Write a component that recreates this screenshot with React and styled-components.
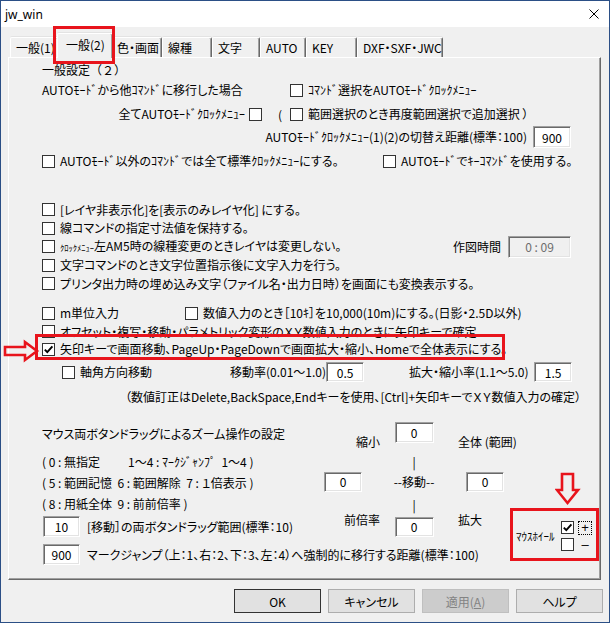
import React from "react";
import styled, { createGlobalStyle } from "styled-components";

const Global = createGlobalStyle`
  html, body { margin: 0; padding: 0; background: #ffffff; }
  * { box-sizing: border-box; }
`;

const Window = styled.div`
  position: relative;
  width: 610px;
  height: 623px;
  border: 1px solid #2b4f86;
  background: #f0f0f0;
  display: flex;
  flex-direction: column;
  font-family: "Noto Sans CJK JP", "Noto Sans", sans-serif;
  font-size: 12px;
  color: #000;
  font-feature-settings: "palt";
  overflow: hidden;
`;

const TitleBar = styled.div`
  height: 26px;
  flex: 0 0 26px;
  background: #ffffff;
  display: flex;
  align-items: center;
  justify-content: space-between;
  padding: 0 10px 0 4px;
`;

const Title = styled.span`
  font-family: "Noto Sans", "Open Sans", sans-serif;
  font-size: 12px;
`;

const TabStrip = styled.div`
  position: relative;
  z-index: 1;
  display: flex;
  align-items: flex-end;
  height: 24px;
  flex: 0 0 24px;
  margin-top: 6px;
  padding-left: 9px;
`;

const Tab = styled.div`
  flex: 0 0 ${(p) => p.$w + (p.$active ? 4 : 0)}px;
  height: ${(p) => (p.$active ? 25 : 20)}px;
  margin: 0 ${(p) => (p.$active ? -2 : 0)}px ${(p) => (p.$active ? -1 : 0)}px;
  position: relative;
  z-index: ${(p) => (p.$active ? 2 : 0)};
  background: #f0f0f0;
  border-top: 1px solid #ffffff;
  border-left: 1px solid #ffffff;
  border-right: 1px solid #696969;
  box-shadow: inset -1px 0 0 #a0a0a0, 0 -1px 0 #e3e3e3;
  border-radius: 2px 2px 0 0;
  display: flex;
  align-items: ${(p) => (p.$active ? "flex-start" : "center")};
  padding: ${(p) => (p.$active ? "2px 0 0 8px" : "0 0 0 5px")};
  white-space: nowrap;
`;

const Panel = styled.div`
  margin-left: 7px;
  width: 593px;
  height: 523px;
  flex: 0 0 523px;
  border-top: 1px solid #ffffff;
  border-left: 1px solid #ffffff;
  border-right: 1px solid #696969;
  border-bottom: 1px solid #696969;
  box-shadow: inset -1px -1px 0 #a0a0a0;
  padding-left: 33px;
  display: flex;
  flex-direction: column;
`;

const Row = styled.div`
  display: flex;
  align-items: center;
  height: ${(p) => p.$h || 20}px;
  flex: 0 0 ${(p) => p.$h || 20}px;
  margin-top: ${(p) => p.$mt || 0}px;
  padding-left: ${(p) => p.$pl || 0}px;
  white-space: nowrap;
`;

const Cell = styled.div`
  flex: 0 0 ${(p) => p.$w}px;
  margin-left: ${(p) => p.$ml || 0}px;
  display: flex;
  align-items: center;
  justify-content: ${(p) => (p.$end ? "flex-end" : "flex-start")};
  white-space: nowrap;
`;

const Text = styled.span`
  flex-shrink: 0;
  white-space: pre;
  line-height: 16px;
  font-feature-settings: ${(p) => (p.$fullWidth ? "normal" : "inherit")};
`;

/* the tiny half-width katakana some labels use */
const Small = styled.span`
  font-size: 8.5px;
`;

const Paren = styled.span`
  flex: 0 0 28px;
  padding-left: 16px;
`;

const CheckItem = styled.label`
  display: flex;
  align-items: center;
  gap: 5px;
  flex-shrink: 0;
`;

const Box = styled.span`
  flex: 0 0 13px;
  width: 13px;
  height: 13px;
  margin-left: ${(p) => p.$ml || 0}px;
  border: 1px solid #333333;
  background: #ffffff;
  display: inline-flex;
  align-items: center;
  justify-content: center;
`;

const Field = styled.div`
  flex: 0 0 ${(p) => p.$w || 38}px;
  width: ${(p) => p.$w || 38}px;
  height: ${(p) => p.$h || 21}px;
  margin-left: ${(p) => p.$ml || 0}px;
  background: ${(p) => (p.$disabled ? "#f0f0f0" : "#ffffff")};
  color: ${(p) => (p.$disabled ? "#6d6d6d" : "#000000")};
  border-style: solid;
  border-width: 1px;
  border-color: #a0a0a0 #ffffff #ffffff #a0a0a0;
  box-shadow: inset 1px 1px 0 #696969, inset -1px -1px 0 #e3e3e3;
  display: flex;
  align-items: center;
  justify-content: center;
  white-space: pre;
`;

const ZoomSection = styled.div`
  display: grid;
  grid-template-columns: 282px 180px 1fr;
  grid-template-areas:
    "desc pad wheel"
    "jump jump wheel";
  margin-top: 15px;
`;

const Desc = styled.div`
  grid-area: desc;
  display: flex;
  flex-direction: column;
`;

const DescTitle = styled.div`
  height: 24px;
  line-height: 24px;
  white-space: nowrap;
`;

const DescLine = styled.div`
  height: 21px;
  display: flex;
  align-items: center;
  margin-top: ${(p) => p.$mt || 0}px;
  white-space: pre;
`;

const Spacer = styled.span`
  display: inline-block;
  flex: 0 0 ${(p) => p.$w}px;
`;

const FieldRow = styled.div`
  grid-area: ${(p) => p.$area || "auto"};
  display: flex;
  align-items: center;
  gap: 7px;
  height: 21px;
  margin-top: ${(p) => p.$mt || 0}px;
  padding-left: 1px;
  white-space: nowrap;
`;

const Pad = styled.div`
  grid-area: pad;
  display: grid;
  grid-template-columns: 68px 44px 68px;
  grid-template-rows: 25px 25px 20px 25px 20px;
`;

const PadItem = styled.div`
  grid-column: ${(p) => p.$col};
  grid-row: ${(p) => p.$row};
  justify-self: ${(p) => p.$jx || "center"};
  align-self: ${(p) => p.$jy || "center"};
  padding: ${(p) => p.$pad || "0"};
  margin: ${(p) => p.$m || "0"};
  line-height: 14px;
  white-space: nowrap;
`;

const Wheel = styled.div`
  grid-area: wheel;
  align-self: start;
  margin-top: 97px;
  padding-left: 12px;
  display: flex;
  align-items: center;
`;

const WheelLabel = styled.span`
  flex: 0 0 45px;
  font-size: 11px;
  white-space: nowrap;
`;

const WheelGrid = styled.div`
  display: grid;
  grid-template-columns: 13px 14px;
  grid-template-rows: 17px 17px;
  column-gap: 4px;
  align-items: center;
`;

const Sign = styled.span`
  width: 14px;
  height: 14px;
  display: flex;
  align-items: center;
  justify-content: center;
  outline: ${(p) => (p.$focus ? "1px dotted #000" : "none")};
  outline-offset: -1px;
  font-family: "Liberation Sans", sans-serif;
  font-size: 13px;
  line-height: 14px;
`;

const ButtonBar = styled.div`
  display: flex;
  justify-content: flex-end;
  gap: 7px;
  margin-top: 9px;
  padding-right: 6px;
`;

const Button = styled.div`
  width: 87px;
  height: 24px;
  border: 1px solid ${(p) => (p.$default ? "#333333" : p.$disabled ? "#bfbfbf" : "#adadad")};
  background: ${(p) => (p.$disabled ? "#cccccc" : "#e1e1e1")};
  color: ${(p) => (p.$disabled ? "#838383" : "#000000")};
  display: flex;
  align-items: center;
  justify-content: center;
`;

/* red annotation frames and arrows drawn over the dialog */
const Frame = styled.div`
  position: absolute;
  left: ${(p) => p.$x}px;
  top: ${(p) => p.$y}px;
  width: ${(p) => p.$w}px;
  height: ${(p) => p.$h}px;
  border: 3px solid #e8141c;
  pointer-events: none;
  z-index: 5;
`;

const ArrowSvg = styled.svg`
  position: absolute;
  left: ${(p) => p.$x}px;
  top: ${(p) => p.$y}px;
  pointer-events: none;
  z-index: 5;
`;

const Tick = () => (
  <svg width="11" height="11" viewBox="0 0 11 11">
    <path d="M1.8 5.6 L4.3 8.2 L9.4 2.4" fill="none" stroke="#000" strokeWidth="1.9" />
  </svg>
);

const Check = ({ label, checked }) => (
  <CheckItem>
    <Box>{checked && <Tick />}</Box>
    {label && <Text>{label}</Text>}
  </CheckItem>
);

const CloseIcon = () => (
  <svg width="10" height="10" viewBox="0 0 10 10">
    <path d="M0.5 0.5 L9.5 9.5 M9.5 0.5 L0.5 9.5" stroke="#000" strokeWidth="1" />
  </svg>
);

const tabs = [
  { label: "一般(1)", w: 49 },
  { label: "一般(2)", w: 52, active: true },
  { label: "色・画面", w: 51 },
  { label: "線種", w: 50 },
  { label: "文字", w: 48 },
  { label: "AUTO", w: 46 },
  { label: "KEY", w: 51 },
  { label: "DXF・SXF・JWC", w: 85 },
];

export default function App() {
  return (
    <>
      <Global />
      <Window>
        <TitleBar>
          <Title>jw_win</Title>
          <CloseIcon />
        </TitleBar>

        <TabStrip>
          {tabs.map((t) => (
            <Tab key={t.label} $w={t.w} $active={t.active}>
              {t.label}
            </Tab>
          ))}
        </TabStrip>

        <Panel>
          <Row $mt={2}>
            <Text $fullWidth>一般設定（２）</Text>
          </Row>
          <Row>
            <Cell $w={248}>
              <Text>AUTOﾓｰﾄﾞから他ｺﾏﾝﾄﾞに移行した場合</Text>
            </Cell>
            <Check label="ｺﾏﾝﾄﾞ選択をAUTOﾓｰﾄﾞｸﾛｯｸﾒﾆｭｰ" />
          </Row>
          <Row $mt={4}>
            <Cell $w={248} $end>
              <Text>全てAUTOﾓｰﾄﾞｸﾛｯｸﾒﾆｭｰ</Text>
              <Box $ml={4} />
              <Paren>(</Paren>
            </Cell>
            <Check label="範囲選択のとき再度範囲選択で追加選択 ）" />
          </Row>
          <Row $mt={2} $h={22}>
            <Cell $w={485} $end>
              <Text>AUTOﾓｰﾄﾞｸﾛｯｸﾒﾆｭｰ(1)(2)の切替え距離(標準：100)</Text>
            </Cell>
            <Field $w={38} $h={22} $ml={6}>900</Field>
          </Row>
          <Row $mt={3}>
            <Cell $w={341}>
              <Check label="AUTOﾓｰﾄﾞ以外のｺﾏﾝﾄﾞでは全て標準ｸﾛｯｸﾒﾆｭｰにする。" />
            </Cell>
            <Check label="AUTOﾓｰﾄﾞでｷｰｺﾏﾝﾄﾞを使用する。" />
          </Row>

          <Row $mt={29} $h={19}>
            <Check label="[レイヤ非表示化]を[表示のみレイヤ化] にする。" />
          </Row>
          <Row $h={18}>
            <Check label="線コマンドの指定寸法値を保持する。" />
          </Row>
          <Row $h={19}>
            <Cell $w={411}>
              <Check
                label={
                  <>
                    <Small>ｸﾛｯｸﾒﾆｭｰ</Small>左AM5時の線種変更のときレイヤは変更しない。
                  </>
                }
              />
            </Cell>
            <Text>作図時間</Text>
            <Field $w={63} $h={22} $ml={7} $disabled>
              0 : 09
            </Field>
          </Row>
          <Row $h={18}>
            <Check label="文字コマンドのとき文字位置指示後に文字入力を行う。" />
          </Row>
          <Row $h={19}>
            <Check label="プリンタ出力時の埋め込み文字（ファイル名・出力日時）を画面にも変換表示する。" />
          </Row>

          <Row $mt={10}>
            <Cell $w={143}>
              <Check label="m単位入力" />
            </Cell>
            <Check label="数値入力のとき［10ｷ］を10,000(10m)にする。(日影・2.5D以外)" />
          </Row>
          <Row $h={17}>
            <Check label="オフセット・複写・移動・パラメトリック変形のＸＹ数値入力のときに矢印キーで確定" />
          </Row>
          <Row $h={18}>
            <Check checked label="矢印キーで画面移動、PageUp・PageDownで画面拡大・縮小、Homeで全体表示にする。" />
          </Row>
          <Row $mt={4} $pl={20}>
            <Cell $w={168}>
              <Check label="軸角方向移動" />
            </Cell>
            <Cell $w={95}>
              <Text>移動率(0.01〜1.0)</Text>
            </Cell>
            <Field $w={38} $h={20}>0.5</Field>
            <Cell $w={125} $ml={45}>
              <Text>拡大・縮小率(1.1〜5.0)</Text>
            </Cell>
            <Field $w={38} $h={20}>1.5</Field>
          </Row>
          <Row $mt={5} $pl={83}>
            <Text>（数値訂正はDelete,BackSpace,Endキーを使用、[Ctrl]+矢印キーでＸＹ数値入力の確定）</Text>
          </Row>

          <ZoomSection>
            <Desc>
              <DescTitle>マウス両ボタンドラッグによるズーム操作の設定</DescTitle>
              <DescLine $mt={5}>
                <Spacer $w={86}>( 0 : 無指定</Spacer>
                <span>1〜4 : ﾏｰｸｼﾞｬﾝﾌﾟ  1〜4 )</span>
              </DescLine>
              <DescLine>( 5 : 範囲記憶  6 : 範囲解除  7 : １倍表示 )</DescLine>
              <DescLine>( 8 : 用紙全体  9 : 前前倍率 )</DescLine>
              <FieldRow $mt={2}>
                <Field $w={37} $h={21}>10</Field>
                <Text>[移動］の両ボタンドラッグ範囲(標準：10)</Text>
              </FieldRow>
            </Desc>

            <Pad>
              <PadItem $col={1} $row={1} $jx="end" $jy="end" $pad="0 12px 0 0" $m="0 0 -2px 0">
                縮小
              </PadItem>
              <PadItem $col={2} $row={1} $jy="start">
                <Field $w={39} $h={21}>0</Field>
              </PadItem>
              <PadItem $col={3} $row={1} $jx="start" $jy="end" $pad="0 0 0 22px" $m="0 0 -2px 0">
                全体 (範囲)
              </PadItem>
              <PadItem $col={2} $row={2} $m="4px 0 0 0">|</PadItem>
              <PadItem $col={1} $row={3} $jx="start">
                <Field $w={38} $h={20}>0</Field>
              </PadItem>
              <PadItem $col={2} $row={3}>--移動--</PadItem>
              <PadItem $col={3} $row={3} $jx="end">
                <Field $w={38} $h={20}>0</Field>
              </PadItem>
              <PadItem $col={2} $row={4}>|</PadItem>
              <PadItem $col={1} $row={5} $jx="end" $jy="start" $pad="0 12px 0 0" $m="-4px 0 0 0">
                前倍率
              </PadItem>
              <PadItem $col={2} $row={5}>
                <Field $w={39} $h={20}>0</Field>
              </PadItem>
              <PadItem $col={3} $row={5} $jx="start" $jy="start" $pad="0 0 0 22px" $m="-4px 0 0 0">
                拡大
              </PadItem>
            </Pad>

            <FieldRow $area="jump" $mt={7}>
              <Field $w={37} $h={21}>900</Field>
              <Text>マークジャンプ（上：1、右：2、下：3、左：4）へ強制的に移行する距離(標準：100)</Text>
            </FieldRow>

            <Wheel>
              <WheelLabel>ﾏｳｽﾎｲｰﾙ</WheelLabel>
              <WheelGrid>
                <Box>
                  <Tick />
                </Box>
                <Sign $focus>+</Sign>
                <Box />
                <Sign>–</Sign>
              </WheelGrid>
            </Wheel>
          </ZoomSection>
        </Panel>

        <ButtonBar>
          <Button $default>OK</Button>
          <Button>キャンセル</Button>
          <Button $disabled>
            <span>
              適用(<u>A</u>)
            </span>
          </Button>
          <Button>ヘルプ</Button>
        </ButtonBar>

        <Frame $x={52} $y={25} $w={62} $h={38} />
        <Frame $x={34} $y={333} $w={470} $h={26} />
        <Frame $x={509} $y={507} $w={89} $h={53} />

        <ArrowSvg $x={1} $y={338} width="38" height="24" viewBox="0 0 38 24">
          <polygon
            points="3,8 23,8 23,3 35,12 23,21 23,16 3,16"
            fill="none"
            stroke="#e8141c"
            strokeWidth="2.6"
            strokeLinejoin="miter"
          />
        </ArrowSvg>
        <ArrowSvg $x={554} $y={470} width="26" height="36" viewBox="0 0 26 36">
          <polygon
            points="7,3 18,3 18,19 23,19 12.5,32 2,19 7,19"
            fill="none"
            stroke="#e8141c"
            strokeWidth="2.6"
            strokeLinejoin="miter"
          />
        </ArrowSvg>
      </Window>
    </>
  );
}
